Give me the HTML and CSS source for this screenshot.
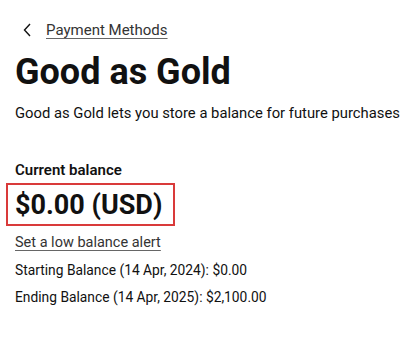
FILE: index.html
```html
<!DOCTYPE html>
<html>
<head>
<meta charset="utf-8">
<link rel="stylesheet" href="styles.css">
</head>
<body>
<div class="page">
  <nav class="crumb">
    <svg class="chev" width="8" height="14" viewBox="0 0 8 14"><path d="M7 1 L1.5 7 L7 13" fill="none" stroke="#111" stroke-width="1.4"/></svg>
    <a class="crumb-link" href="#">Payment Methods</a>
  </nav>
  <h1 class="title">Good as Gold</h1>
  <p class="desc">Good as Gold lets you store a balance for future purchases</p>
  <section class="balance">
    <div class="label">Current balance</div>
    <div class="amount-box"><span class="amount">$0.00 (USD)</span></div>
    <a class="alert-link" href="#">Set a low balance alert</a>
    <div class="line">Starting Balance (14 Apr, 2024): $0.00</div>
    <div class="line">Ending Balance (14 Apr, 2025): $2,100.00</div>
  </section>
</div>
</body>
</html>
```
FILE: styles.css
```css
html, body { margin: 0; padding: 0; background: #fff; }
body { font-family: Roboto, "Noto Sans", sans-serif; color: #111; width: 400px; overflow: hidden; }
.page { padding: 20px 0 0 15px; }
.crumb { display: flex; align-items: center; gap: 15px; height: 20px; padding-left: 8px; }
.chev { display: block; }
.crumb-link { font-size: 15px; color: #333; text-decoration: underline; text-decoration-color: #666; text-underline-offset: 3px; text-decoration-thickness: 1px; }
.title { margin: 12px 0 0 0; font-size: 36px; font-weight: 700; line-height: 40px; }
.desc { margin: 11px 0 0 0; font-size: 14.8px; line-height: 20px; white-space: nowrap; }
.balance { margin-top: 37px; display: flex; flex-direction: column; align-items: flex-start; }
.label { font-size: 15px; font-weight: 600; line-height: 20px; }
.amount-box { margin: 3px 0 0 -9px; border: 2px solid #d93a3a; padding: 3px 11px 2px 7px; }
.amount { font-size: 27px; font-weight: 700; line-height: 34px; display: block; }
.alert-link { margin-top: 7px; font-size: 14.5px; color: #333; text-decoration: underline; text-decoration-color: #666; text-underline-offset: 3px; line-height: 20px; }
.line { margin-top: 7px; font-size: 13.8px; line-height: 20px; }
```
